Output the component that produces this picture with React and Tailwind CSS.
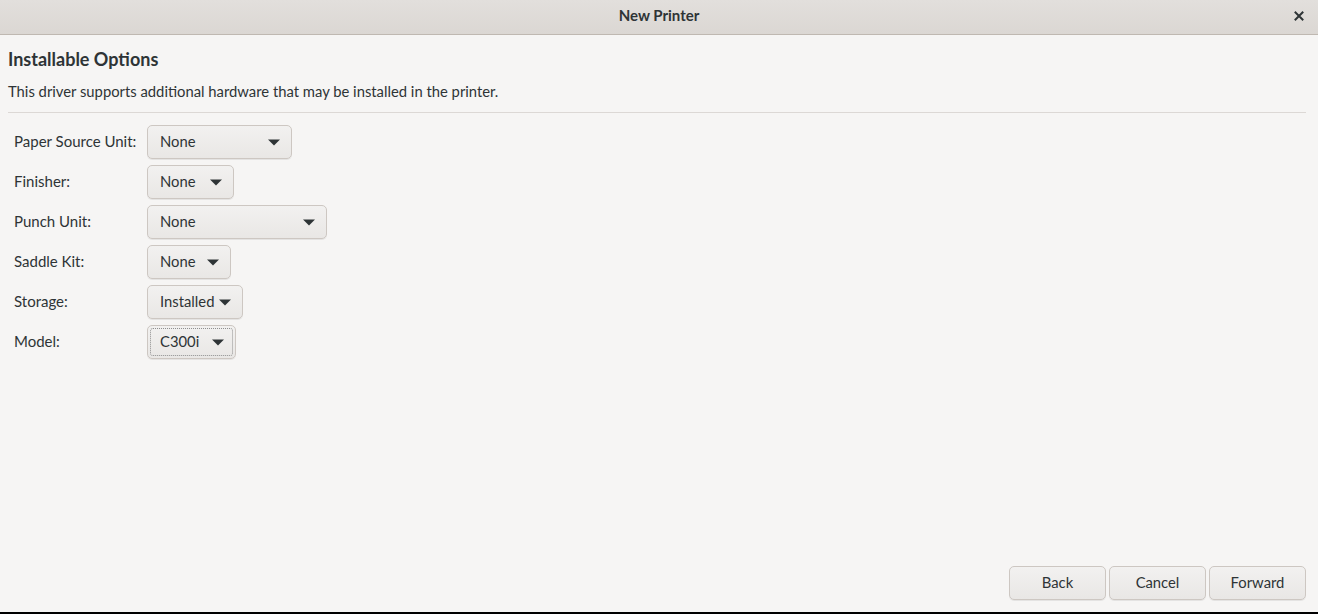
import { useState } from 'react';

const FONT = { fontFamily: 'Lato, "Noto Sans", "Liberation Sans", sans-serif' };

// Opciones de hardware instalable del controlador
const OPTIONS = [
  { label: 'Paper Source Unit:', value: 'None', width: 'w-[145px]' },
  { label: 'Finisher:', value: 'None', width: 'w-[87px]' },
  { label: 'Punch Unit:', value: 'None', width: 'w-[180px]' },
  { label: 'Saddle Kit:', value: 'None', width: 'w-[84px]' },
  { label: 'Storage:', value: 'Installed', width: 'w-[96px]' },
  { label: 'Model:', value: 'C300i', width: 'w-[89px]', focused: true },
];

function Arrow() {
  return (
    <svg width="12" height="7" viewBox="0 0 12 7" className="shrink-0">
      <polygon points="0,0.5 12,0.5 6,6.5" fill="#2e3436" />
    </svg>
  );
}

function Combo({ value, width, focused }) {
  return (
    <button
      type="button"
      className={`${width} h-[34px] rounded-[5px] border border-[#cdc7c2] bg-gradient-to-b from-[#f2f1f0] to-[#e9e7e5] shadow-[0_1px_0_rgba(0,0,0,0.07)] p-[2px] text-left`}
    >
      <div
        className={`h-full flex items-center justify-between pl-[9px] pr-[8px] rounded-[3px] border border-dotted ${
          focused ? 'border-[#8f8f8f]' : 'border-transparent'
        }`}
      >
        <span className="text-[14.8px] leading-[18px] pb-[2px] text-[#2e3436] whitespace-nowrap">{value}</span>
        <Arrow />
      </div>
    </button>
  );
}

function FooterButton({ children }) {
  return (
    <button
      type="button"
      className="w-[97px] h-[34px] pb-[2px] rounded-[5px] border border-[#cdc7c2] bg-gradient-to-b from-[#f2f1f0] to-[#e9e7e5] shadow-[0_1px_0_rgba(0,0,0,0.07)] text-[14.8px] text-[#2e3436]"
    >
      {children}
    </button>
  );
}

export default function App() {
  const [options] = useState(OPTIONS);

  return (
    <div className="w-[1318px] h-[614px] bg-black" style={FONT}>
      <div className="h-[612px] flex flex-col bg-[#f6f5f4] text-[#2e3436]">
        {/* Barra de título */}
        <div className="h-[35px] shrink-0 flex items-center justify-center pb-[3px] relative bg-gradient-to-b from-[#e2dfdc] to-[#dbd7d3] border-b border-[#bfb8b1]">
          <span className="text-[15px] font-bold text-[#2e3436]">New Printer</span>
          <button type="button" className="absolute right-[12px] top-[9px] w-[14px] h-[14px] flex items-center justify-center">
            <svg width="10" height="10" viewBox="0 0 10 10">
              <path d="M1.5 1.5 L8.5 8.5 M8.5 1.5 L1.5 8.5" stroke="#2e3436" strokeWidth="2" strokeLinecap="square" />
            </svg>
          </button>
        </div>

        <div className="flex-1 flex flex-col px-[8px] pr-[12px]">
          <h1 className="mt-[14px] h-[20px] leading-[20px] text-[18px] font-bold">Installable Options</h1>
          <p className="mt-[12px] h-[20px] leading-[20px] text-[14.8px]">
            This driver supports additional hardware that may be installed in the printer.
          </p>
          <div className="mt-[11px] h-px bg-[#dcd8d5]" />

          <div className="mt-[12px] flex flex-col gap-[6px]">
            {options.map((opt) => (
              <div key={opt.label} className="flex items-center">
                <span className="w-[139px] pl-[6px] pb-[2px] leading-[18px] text-[15px]">{opt.label}</span>
                <Combo value={opt.value} width={opt.width} focused={opt.focused} />
              </div>
            ))}
          </div>

          <div className="mt-auto mb-[12px] flex justify-end gap-[3px]">
            <FooterButton>Back</FooterButton>
            <FooterButton>Cancel</FooterButton>
            <FooterButton>Forward</FooterButton>
          </div>
        </div>
      </div>
    </div>
  );
}
